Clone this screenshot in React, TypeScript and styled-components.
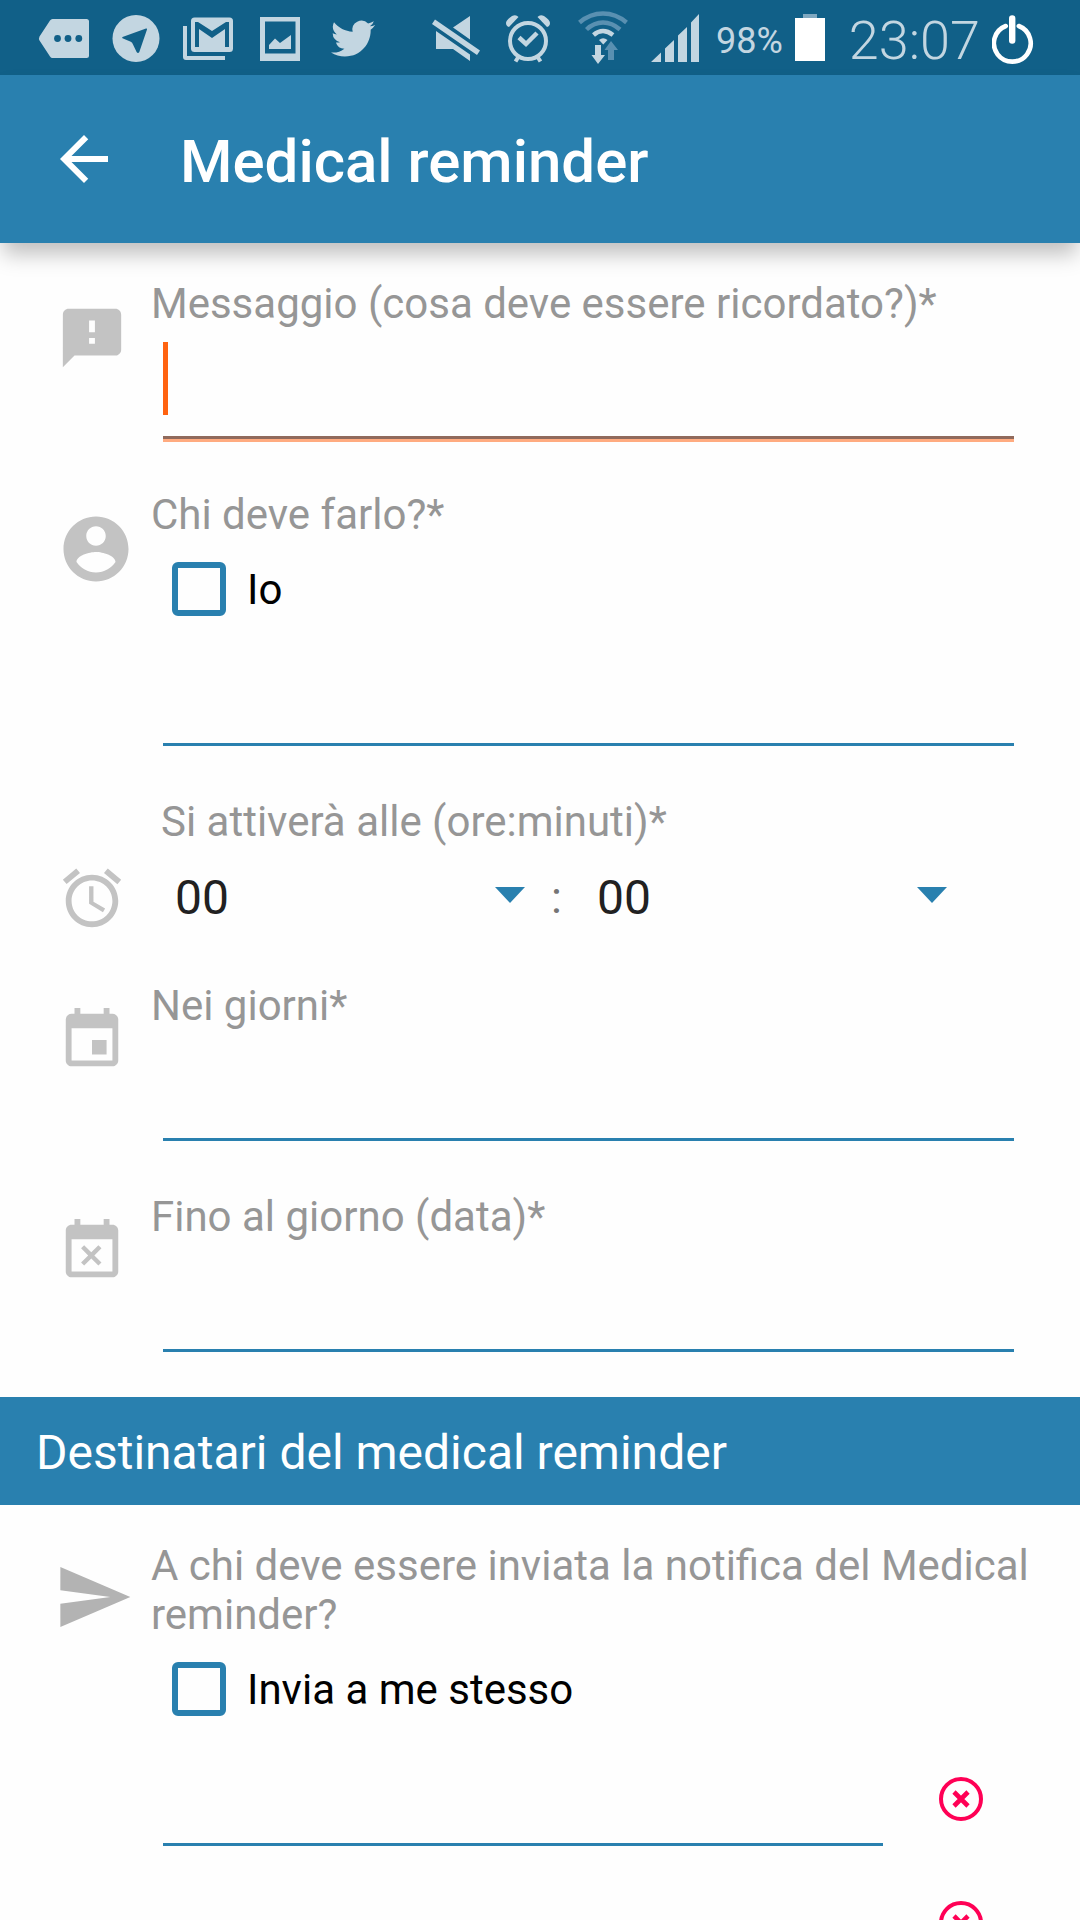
import React from "react";
import styled, { createGlobalStyle } from "styled-components";

const BLUE = "#2980af";
const BAR = "#116088";
const PALE = "#c3d6e1";
const DIM = "#5990b1";
const GREY = "#969696";
const ICON = "#c3c3c3";
const PINK = "#ff0055";
const ORANGE = "#ff6310";

const GlobalStyle = createGlobalStyle`
  * { box-sizing: border-box; }
  body {
    margin: 0;
    background: #fefefe;
    font-family: Roboto, "Noto Sans", sans-serif;
  }
`;

const Screen = styled.div`
  display: flex;
  flex-direction: column;
  height: 100vh;
  background: #fefefe;
`;

/* ---------- status bar ---------- */

const StatusBar = styled.div`
  display: flex;
  justify-content: space-between;
  flex: none;
  height: 75px;
  padding: 0 46px 0 28px;
  background: ${BAR};
  color: ${PALE};
`;

const StatusGroup = styled.div`
  display: flex;
  align-items: center;
`;

const StatusIcon = styled.svg`
  display: block;
  flex: none;
  height: 75px;
  fill: ${PALE};
`;

const BatteryLevel = styled.span`
  margin: 7px 12px 0 8px;
  font-size: 36px;
  line-height: 42px;
`;

const Clock = styled.time`
  margin: 7px 12px 0 24px;
  font-size: 54px;
  font-weight: 300;
  line-height: 64px;
`;

/* ---------- app bar ---------- */

const AppBar = styled.header`
  position: relative;
  z-index: 1;
  display: flex;
  align-items: center;
  gap: 60px;
  flex: none;
  height: 168px;
  padding: 0 48px;
  background: ${BLUE};
  color: #fff;
  box-shadow: 0 14px 20px -3px rgba(0, 0, 0, 0.25);
`;

const IconButton = styled.button`
  display: block;
  flex: none;
  padding: 0;
  border: 0;
  background: none;
  color: inherit;
  cursor: pointer;

  svg {
    display: block;
  }
`;

const Title = styled.h1`
  margin: 0;
  padding-top: 5px;
  font-size: 60px;
  font-weight: 500;
  line-height: 70px;
`;

/* ---------- form ---------- */

const Content = styled.main`
  flex: 1;
  min-height: 0;
  overflow-y: auto;
  scrollbar-width: none;
`;

const Section = styled.section`
  display: flex;
  flex-direction: column;
  gap: 51px;
  padding: 36px 40px 45px 57px;
`;

const Row = styled.div`
  display: grid;
  grid-template-columns: 94px minmax(0, 1fr);
  align-items: start;
`;

/* The icon may reach below its row without making the row taller. */
const RowIcon = styled.svg<{ $size: number; $top: number }>`
  display: block;
  width: ${(p) => p.$size}px;
  height: ${(p) => p.$size}px;
  margin-top: ${(p) => p.$top}px;
  margin-bottom: -12px;
  overflow: visible;
`;

const labelText = `
  display: block;
  color: ${GREY};
  font-size: 42px;
  line-height: 49px;
`;

const Label = styled.label`
  ${labelText}
`;

const Caption = styled.div<{ $inset?: boolean }>`
  ${labelText}
  padding-left: ${(p) => (p.$inset ? 10 : 0)}px;
`;

const FieldArea = styled.div`
  display: grid;
  margin: 0 26px 0 12px;
`;

const TextInput = styled.input<{ $active?: boolean }>`
  grid-area: 1 / 1;
  width: 100%;
  min-width: 0;
  height: 111px;
  padding: 0;
  border: 0;
  border-bottom: 3px solid ${(p) => (p.$active ? "#906a5c" : BLUE)};
  border-radius: 0;
  outline: none;
  background: none;
  box-shadow: ${(p) => (p.$active ? "0 3px 0 #ffab80" : "none")};
  color: #212121;
  font: 48px / 56px Roboto, sans-serif;
  caret-color: ${ORANGE};
`;

const Caret = styled.span`
  grid-area: 1 / 1;
  width: 5px;
  height: 73px;
  margin-top: 14px;
  background: ${ORANGE};
  pointer-events: none;
`;

const CheckRow = styled.label`
  display: flex;
  align-items: center;
  gap: 21px;
  height: 96px;
  padding: 4px 0 0 21px;
  color: #000;
  font-size: 42px;
  line-height: 49px;
`;

const CheckBox = styled.input`
  appearance: none;
  flex: none;
  width: 54px;
  height: 54px;
  margin: 0;
  border: 6px solid ${BLUE};
  border-radius: 6px;

  &:checked {
    background: ${BLUE};
  }
`;

const TimeRow = styled.div`
  display: flex;
  align-items: center;
  height: 84px;
  padding: 20px 67px 0 12px;
`;

const Picker = styled.div`
  display: grid;
  align-items: center;
  flex: 1;
  min-width: 0;
`;

const Select = styled.select`
  grid-area: 1 / 1;
  appearance: none;
  width: 100%;
  height: 64px;
  padding: 0 60px 0 12px;
  border: 0;
  background: none;
  color: #212121;
  font: 48px / 56px Roboto, sans-serif;
`;

const Arrow = styled.svg`
  grid-area: 1 / 1;
  justify-self: end;
  width: 30px;
  height: 22px;
  margin-right: 26px;
  fill: ${BLUE};
  pointer-events: none;
`;

const Colon = styled.span`
  width: 34px;
  color: #757575;
  font-size: 45px;
  line-height: 56px;
`;

const Banner = styled.h2`
  display: flex;
  align-items: center;
  min-height: 108px;
  margin: 0;
  padding: 4px 36px 0;
  background: ${BLUE};
  color: #fff;
  font-size: 48px;
  font-weight: 400;
  line-height: 56px;
`;

const Recipients = styled.div`
  display: flex;
  flex-direction: column;
  gap: 13px;
`;

const Recipient = styled.div`
  display: flex;
  align-items: flex-end;
  gap: 56px;
  padding: 0 57px 0 12px;
`;

const RemoveButton = styled(IconButton)`
  margin-bottom: 25px;
  color: ${PINK};
`;

const pad = (n: number) => String(n).padStart(2, "0");

function TimePicker({ name, count }: { name: string; count: number }) {
  return (
    <Picker>
      <Select aria-label={name} defaultValue="00">
        {Array.from({ length: count }, (_, n) => (
          <option key={n} value={pad(n)}>
            {pad(n)}
          </option>
        ))}
      </Select>
      <Arrow viewBox="0 0 30 22" aria-hidden="true">
        <path d="M0 0h30L15 16z" />
      </Arrow>
    </Picker>
  );
}

function RecipientField({ index }: { index: number }) {
  return (
    <Recipient>
      <TextInput type="text" aria-label={`Destinatario ${index}`} />
      <RemoveButton type="button" aria-label={`Rimuovi destinatario ${index}`}>
        <svg width="44" height="44" viewBox="0 0 44 44" fill="none" stroke="currentColor" strokeWidth="4">
          <circle cx="22" cy="22" r="20" />
          <path strokeWidth="4.600" d="M15 15l14 14M29 15L15 29" />
        </svg>
      </RemoveButton>
    </Recipient>
  );
}

function PhoneStatus() {
  return (
    <StatusBar>
      <StatusGroup>
        <StatusIcon width="72" viewBox="28 0 72 75">
          <path d="M51.500 19H86.500Q89 19 89 21.500V55.500Q89 58 86.500 58H52.500Q51 58 50 56.500L39.500 40.500Q38.500 38.500 39.500 36.500L50 20.500Q51 19 52.500 19z" />
          <g fill={BAR}>
            <circle cx="57.500" cy="38.500" r="3.400" />
            <circle cx="68" cy="38.500" r="3.400" />
            <circle cx="78.800" cy="38.500" r="3.400" />
          </g>
        </StatusIcon>
        <StatusIcon width="72" viewBox="100 0 72 75">
          <circle cx="136" cy="38.500" r="23.500" />
          <path fill={BAR} d="M122.500 37L146 28.600Q147.300 28.300 147 29.500L139.300 52Q138 54 136.600 52L133 44.500Q132.300 42.500 130.800 41.800L122.500 38.300Q121.800 37.600 122.500 37z" />
        </StatusIcon>
        <StatusIcon width="72" viewBox="172 0 72 75">
          <path d="M183 26H187V56H225V60H186Q183 60 183 57z" />
          <rect x="191" y="17.500" width="42" height="34.500" rx="3.500" />
          <path fill={BAR} d="M195 22H198L212 31L226 22H229V47H225V29L212 38L199 29V47H195z" />
        </StatusIcon>
        <StatusIcon width="72" viewBox="244 0 72 75">
          <path fillRule="evenodd" d="M260 17H300V61H260zM265 21.500V53.500H295.500V21.500z" />
          <path d="M269 49V45L275 38.500L280 43L291 35V49z" />
        </StatusIcon>
        <StatusIcon width="72" viewBox="316 0 72 75">
          <path
            transform="translate(331 16.500) scale(1.840)"
            d="M23.953 4.570a10 10 0 01-2.825.775 4.958 4.958 0 002.163-2.723c-.951.555-2.005.959-3.127 1.184a4.920 4.920 0 00-8.384 4.482C7.690 8.095 4.067 6.130 1.640 3.162a4.822 4.822 0 00-.666 2.475c0 1.710.870 3.213 2.188 4.096a4.904 4.904 0 01-2.228-.616v.060a4.923 4.923 0 003.946 4.827 4.996 4.996 0 01-2.212.085 4.936 4.936 0 004.604 3.417 9.867 9.867 0 01-6.102 2.105c-.390 0-.779-.023-1.170-.067a13.995 13.995 0 007.557 2.209c9.053 0 13.998-7.496 13.998-13.985 0-.210 0-.420-.015-.630A9.935 9.935 0 0024 4.590z"
          />
        </StatusIcon>
      </StatusGroup>
      <StatusGroup>
        <StatusIcon width="72" viewBox="420 0 72 75">
          <path d="M435 19.500L480 50.500L477 55L432 24zM470 16V39.500L453 27.500zM436 31L470 54.500V61L453 49H436z" />
        </StatusIcon>
        <StatusIcon width="72" viewBox="492 0 72 75">
          <g fill="none" stroke={PALE} strokeWidth="4">
            <circle cx="528" cy="41" r="18" />
            <path strokeWidth="4.500" d="M519 37.500L526 44L537 33" />
            <path d="M515.500 61.500L519 56M540.500 61.500L537 56" />
          </g>
          <path d="M506 23Q506 20 512 16Q516 14 518.500 17L509 27Q506 26 506 23zM550 23Q550 20 544 16Q540 14 537.500 17L547 27Q550 26 550 23z" />
        </StatusIcon>
        <StatusIcon width="72" viewBox="564 0 72 75">
          <g fill="none" strokeWidth="4.400">
            <path stroke={DIM} d="M579.500 22.500Q590 13.500 603 13.500T626.500 22.500M586.500 29.500Q594 22.500 603 22.500T620 29.500" />
            <path stroke={PALE} d="M593.500 35Q598 31 603 31T613 35" />
          </g>
          <path d="M599 40Q603 36.500 607.500 40L603.300 44.500z" />
          <path d="M595 45H601V55H605L598 64L591.500 55H595z" />
          <path fill={DIM} d="M608 60V50H604.500L611 41L618 50H614V60z" />
        </StatusIcon>
        <StatusIcon width="72" viewBox="636 0 72 75">
          <path d="M651 62L661 52.500V62zM665 62V48.500L674 40V62zM678 62V35.500L687 27V62zM691 62V22.500L699 14V62z" />
        </StatusIcon>
        <BatteryLevel>98%</BatteryLevel>
        <StatusIcon width="30" viewBox="796 0 30 75">
          <path fill="#80a8c0" d="M804 14H818V18H804z" />
          <path fill="#fff" d="M796 18H826V61H796z" />
        </StatusIcon>
        <Clock>23:07</Clock>
        <StatusIcon width="42" viewBox="992 0 42 75">
          <g fill="none" stroke="#fff" strokeLinecap="round">
            <path strokeWidth="4.600" d="M1005.800 26A18.400 18.400 0 1 0 1018.800 26" />
            <path strokeWidth="6.400" d="M1012.200 18.500V40.500" />
          </g>
        </StatusIcon>
      </StatusGroup>
    </StatusBar>
  );
}

export default function App() {
  return (
    <Screen>
      <GlobalStyle />
      <PhoneStatus />
      <AppBar>
        <IconButton type="button" aria-label="Indietro">
          <svg width="72" height="72" viewBox="0 0 24 24" fill="currentColor">
            <path d="M20 11H7.830l5.590-5.590L12 4l-8 8 8 8 1.410-1.410L7.830 13H20v-2z" />
          </svg>
        </IconButton>
        <Title>Medical reminder</Title>
      </AppBar>
      <Content>
        <Section>
          <Row>
            <RowIcon $size={70} $top={24} viewBox="0 0 24 24" fill={ICON}>
              <path d="M20 2H4c-1.100 0-1.990.900-1.990 2L2 22l4-4h14c1.100 0 2-.900 2-2V4c0-1.100-.900-2-2-2zm-7 12h-2v-2h2v2zm0-4h-2V6h2v4z" />
            </RowIcon>
            <div>
              <Label htmlFor="message">Messaggio (cosa deve essere ricordato?)*</Label>
              <FieldArea>
                <TextInput id="message" type="text" $active />
                <Caret />
              </FieldArea>
            </div>
          </Row>
          <Row>
            <RowIcon $size={78} $top={20} viewBox="0 0 24 24" fill={ICON}>
              <path d="M12 2C6.480 2 2 6.480 2 12s4.480 10 10 10 10-4.480 10-10S17.520 2 12 2zm0 3c1.660 0 3 1.340 3 3s-1.340 3-3 3-3-1.340-3-3 1.340-3 3-3zm0 14.200c-2.500 0-4.710-1.280-6-3.220.030-1.990 4-3.080 6-3.080 1.990 0 5.970 1.090 6 3.080-1.290 1.940-3.500 3.220-6 3.220z" />
            </RowIcon>
            <div>
              <Label htmlFor="who">Chi deve farlo?*</Label>
              <CheckRow>
                <CheckBox type="checkbox" />
                Io
              </CheckRow>
              <FieldArea>
                <TextInput id="who" type="text" />
              </FieldArea>
            </div>
          </Row>
          <Row>
            <RowIcon $size={70} $top={66} viewBox="0 0 24 24" fill={ICON}>
              <path d="M22 5.720l-4.600-3.860-1.290 1.530 4.600 3.860L22 5.720zM7.880 3.390L6.600 1.860 2 5.710l1.290 1.530 4.590-3.850zM12.500 8H11v6l4.750 2.850.750-1.230-4-2.370V8zM12 4c-4.970 0-9 4.030-9 9s4.020 9 9 9c4.970 0 9-4.030 9-9s-4.030-9-9-9zm0 16c-3.870 0-7-3.130-7-7s3.130-7 7-7 7 3.130 7 7-3.130 7-7 7z" />
            </RowIcon>
            <div>
              <Caption $inset>Si attiverà alle (ore:minuti)*</Caption>
              <TimeRow>
                <TimePicker name="Ore" count={24} />
                <Colon>:</Colon>
                <TimePicker name="Minuti" count={60} />
              </TimeRow>
            </div>
          </Row>
          <Row>
            <RowIcon $size={70} $top={24} viewBox="0 0 24 24" fill={ICON}>
              <path d="M17 12h-5v5h5v-5zM16 1v2H8V1H6v2H5c-1.110 0-1.990.900-1.990 2L3 19c0 1.100.890 2 2 2h14c1.100 0 2-.900 2-2V5c0-1.100-.900-2-2-2h-1V1h-2zm3 18H5V8h14v11z" />
            </RowIcon>
            <div>
              <Label htmlFor="days">Nei giorni*</Label>
              <FieldArea>
                <TextInput id="days" type="text" />
              </FieldArea>
            </div>
          </Row>
          <Row>
            <RowIcon $size={70} $top={24} viewBox="0 0 24 24" fill={ICON}>
              <path d="M9.310 17l2.440-2.440L14.190 17l1.060-1.060-2.440-2.440 2.440-2.440L14.190 10l-2.440 2.440L9.310 10l-1.060 1.060 2.440 2.440-2.440 2.440L9.310 17zM19 3h-1V1h-2v2H8V1H6v2H5c-1.110 0-1.990.900-1.990 2L3 19c0 1.100.890 2 2 2h14c1.100 0 2-.900 2-2V5c0-1.100-.900-2-2-2zm0 16H5V8h14v11z" />
            </RowIcon>
            <div>
              <Label htmlFor="until">Fino al giorno (data)*</Label>
              <FieldArea>
                <TextInput id="until" type="text" />
              </FieldArea>
            </div>
          </Row>
        </Section>
        <Banner>Destinatari del medical reminder</Banner>
        <Section>
          <Row>
            <RowIcon $size={80} $top={16} viewBox="1 0 24 24" fill="#b3b3b3">
              <path d="M2.010 21L23 12 2.010 3 2 10l15 2-15 2z" />
            </RowIcon>
            <div>
              <Caption>A chi deve essere inviata la notifica del Medical reminder?</Caption>
              <CheckRow>
                <CheckBox type="checkbox" />
                Invia a me stesso
              </CheckRow>
              <Recipients>
                <RecipientField index={1} />
                <RecipientField index={2} />
              </Recipients>
            </div>
          </Row>
        </Section>
      </Content>
    </Screen>
  );
}
